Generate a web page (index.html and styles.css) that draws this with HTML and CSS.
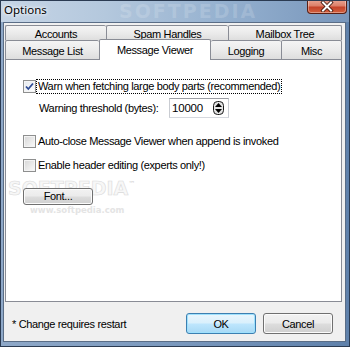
FILE: index.html
```html
<!DOCTYPE html>
<html>
<head>
<meta charset="utf-8">
<title>Options</title>
<link rel="stylesheet" href="styles.css">
</head>
<body>
<div class="window">
  <div class="titlebar">
    <span class="title">Options</span>
    <span class="tb-mark">SOFTPEDIA</span>
    <div class="close">
      <svg width="16" height="11" viewBox="0 0 16 11">
        <path d="M4 1.5 L12 9.5 M12 1.5 L4 9.5" stroke="#3a1208" stroke-width="3.6" stroke-linecap="square"/>
        <path d="M4 1.5 L12 9.5 M12 1.5 L4 9.5" stroke="#ffffff" stroke-width="2" stroke-linecap="square"/>
      </svg>
    </div>
  </div>
  <div class="client">
    <div class="tabs">
      <div class="tabrow back">
        <div class="tab w101">Accounts</div>
        <div class="tab w122">Spam Handles</div>
        <div class="tab w114 last">Mailbox Tree</div>
      </div>
      <div class="tabrow front">
        <div class="tab w94">Message List</div>
        <div class="tab w112 selected">Message Viewer</div>
        <div class="tab w70">Logging</div>
        <div class="tab w61 last">Misc</div>
      </div>
    </div>
    <div class="panel">
      <div class="row r1">
        <span class="cb checked">
          <svg width="11" height="11" viewBox="0 0 11 11"><path d="M2 5.5 L4.3 8 L9 2.5" fill="none" stroke="#2d4a94" stroke-width="1.8"/></svg>
        </span>
        <span class="lbl focus">Warn when fetching large body parts (recommended)</span>
      </div>
      <div class="row r2">
        <span class="thlabel">Warning threshold (bytes):</span>
        <div class="edit">
          <span class="val">10000</span>
          <svg class="spin" width="11" height="14" viewBox="0 0 11 14">
            <rect x="0.5" y="0.5" width="10" height="13" rx="4" fill="#e4e4e4" stroke="#1a1a1a"/>
            <path d="M5.5 2 L9 6 H2 Z" fill="#000"/>
            <path d="M5.5 12 L9 8 H2 Z" fill="#000"/>
          </svg>
        </div>
      </div>
      <div class="row r3">
        <span class="cb"></span>
        <span class="lbl">Auto-close Message Viewer when append is invoked</span>
      </div>
      <div class="row r4">
        <span class="cb"></span>
        <span class="lbl">Enable header editing (experts only!)</span>
      </div>
      <span class="wm-big">SOFTPEDIA<sup>™</sup></span>
      <button class="btn font">Font...</button>
      <span class="wm-small">www.softpedia.com</span>
    </div>
    <div class="footer">
      <span class="note">* Change requires restart</span>
      <div class="btns">
        <button class="btn default">OK</button>
        <button class="btn">Cancel</button>
      </div>
    </div>
  </div>
</div>
</body>
</html>
```
FILE: styles.css
```css
* { box-sizing: border-box; }
html, body { margin: 0; padding: 0; }
body {
  width: 350px;
  height: 347px;
  overflow: hidden;
  font-family: "Liberation Sans", Arial, sans-serif;
  font-size: 11px;
  letter-spacing: -0.35px;
  color: #000;
}
.window {
  width: 350px;
  height: 347px;
  display: flex;
  flex-direction: column;
  padding: 0 3px 4px 2px;
  border: 1px solid #2b3b52;
  background: linear-gradient(to right, #8ea8c8 0%, #7a98bd 50%, #5f81ab 100%);
}
.titlebar {
  height: 21px;
  flex: none;
  display: flex;
  align-items: flex-start;
  position: relative;
  margin: 0 -3px 0 -2px;
  padding-left: 3px;
  background: linear-gradient(to right, #c6d5e6 0%, #b4c8dd 30%, #94b0cf 65%, #7896bb 100%);
  overflow: hidden;
}
.title {
  font-family: "Noto Sans", "Liberation Sans", sans-serif;
  font-size: 11.5px;
  letter-spacing: 0;
  line-height: 18px;
  color: #000;
  text-shadow: 0 0 5px #ffffff, 0 0 3px #ffffff;
}
.tb-mark {
  position: absolute;
  left: 118px;
  top: 0;
  font-family: "DejaVu Sans", sans-serif;
  font-weight: bold;
  font-size: 19px;
  line-height: 20px;
  letter-spacing: 2px;
  color: rgba(255,255,255,0.16);
}
.close {
  margin-left: auto;
  margin-right: 2px;
  margin-top: -1px;
  width: 40px;
  height: 14px;
  border: 1px solid #5a1f14;
  border-top: none;
  border-radius: 0 0 4px 4px;
  background: linear-gradient(to bottom, #e9a593 0%, #dd7f68 45%, #c5432a 55%, #d2613e 100%);
  box-shadow: inset 0 0 0 1px rgba(255,255,255,0.35);
  display: flex;
  align-items: center;
  justify-content: center;
  position: relative;
}
.client {
  flex: 1;
  display: flex;
  flex-direction: column;
  background: #f0f0f0;
  border: 1px solid #5a6d86;
  padding: 2px 3px 0 1px;
}
.tabs { flex: none; }
.tabrow { display: flex; align-items: flex-start; }
.tabrow.back { height: 15px; }
.tabrow.front { height: 19px; }
.tab {
  flex: none;
  border: 1px solid #898c95;
  border-bottom: none;
  border-right: none;
  border-radius: 2px 2px 0 0;
  background: linear-gradient(to bottom, #f4f4f4 0%, #ebebeb 50%, #dedede 100%);
  text-align: center;
  line-height: 13px;
  white-space: nowrap;
}
.tab.last { border-right: 1px solid #898c95; }
.back .tab { height: 15px; padding-top: 2px; }
.front .tab { height: 19px; padding-top: 4px; }
.front .tab.selected {
  height: 21px;
  margin-top: -1px;
  padding-top: 4px;
  background: #ffffff;
  border-right: 1px solid #898c95;
  position: relative;
  z-index: 1;
}
.front .tab.selected + .tab { border-left: none; }
.w101 { width: 101px; }
.w122 { width: 122px; }
.w114 { width: 114px; }
.w94 { width: 94px; }
.w112 { width: 112px; }
.w70 { width: 70px; }
.w61 { width: 61px; }

.panel {
  flex: none;
  height: 243px;
  background: #ffffff;
  border: 1px solid #898c95;
  padding: 0 0 0 17px;
  display: flex;
  flex-direction: column;
  align-items: flex-start;
  position: relative;
}
.row { display: flex; align-items: center; height: 15px; }
.r1 { margin-top: 19px; }
.r2 { margin-top: 4px; height: 20px; }
.r3 { margin-top: 16px; }
.r4 { margin-top: 9px; }
.cb {
  width: 13px;
  height: 13px;
  flex: none;
  border: 1px solid #8e8f8f;
  background: linear-gradient(135deg, #d6d6d6 0%, #e8e8e8 50%, #fbfbfb 100%);
  box-shadow: inset 0 0 0 1px #f4f4f4;
  display: flex;
  align-items: center;
  justify-content: center;
}
.cb.checked { background: linear-gradient(135deg, #e4e8ee 0%, #f4f6f8 60%, #ffffff 100%); }
.lbl {
  margin-left: 0;
  border: 1px solid transparent;
  padding: 0 1px;
  line-height: 13px;
  white-space: nowrap;
}
.lbl.focus { border: 1px dotted #000; }
.thlabel { width: 146px; padding-left: 16px; white-space: nowrap; }
.edit {
  width: 60px;
  height: 20px;
  border: 1px solid #abadb3;
  border-color: #9d9fa5 #c9ccd2 #d5d8de #c9ccd2;
  display: flex;
  align-items: center;
  padding-left: 2px;
}
.val { flex: 1; font-size: 11.5px; letter-spacing: -0.2px; }
.spin { margin-right: 4px; }
.btn {
  font-family: "Liberation Sans", Arial, sans-serif;
  font-size: 11px;
  letter-spacing: -0.35px;
  color: #000;
  border: 1px solid #707070;
  border-radius: 3px;
  background: linear-gradient(to bottom, #f2f2f2 0%, #ebebeb 48%, #dddddd 52%, #cfcfcf 100%);
  box-shadow: inset 0 0 0 1px #fbfbfb;
  padding: 0;
  margin: 0;
}
.wm-big {
  margin-top: 2px;
  margin-left: -15px;
  height: 18px;
  font-family: "DejaVu Sans", sans-serif;
  font-weight: bold;
  font-size: 19px;
  line-height: 18px;
  letter-spacing: 0;
  color: #f7f7f7;
  -webkit-text-stroke: 0.6px #dadada;
}
.wm-big sup { font-size: 7px; font-weight: normal; -webkit-text-stroke: 0; color: #cfcfcf; vertical-align: 9px; }
.btn.font { margin-top: -5px; width: 70px; height: 17px; line-height: 13px; position: relative; }
.wm-small {
  margin-top: 1px;
  margin-left: 7px;
  font-family: "DejaVu Sans", sans-serif;
  font-weight: bold;
  font-size: 8.5px;
  line-height: 9px;
  letter-spacing: 0;
  color: #e4e4e4;
}
.footer {
  flex: 1;
  display: flex;
  align-items: center;
  padding: 4px 9px 0 7px;
}
.note { white-space: nowrap; }
.btns { margin-left: auto; display: flex; gap: 7px; }
.btns .btn { width: 70px; height: 21px; }
.btn.default {
  border-color: #3c7fb1;
  background: linear-gradient(to bottom, #eaf6fd 0%, #d9f0fc 48%, #bee6fd 52%, #a7d9f5 100%);
  box-shadow: inset 0 0 0 1px #9fe1fd;
}
```
